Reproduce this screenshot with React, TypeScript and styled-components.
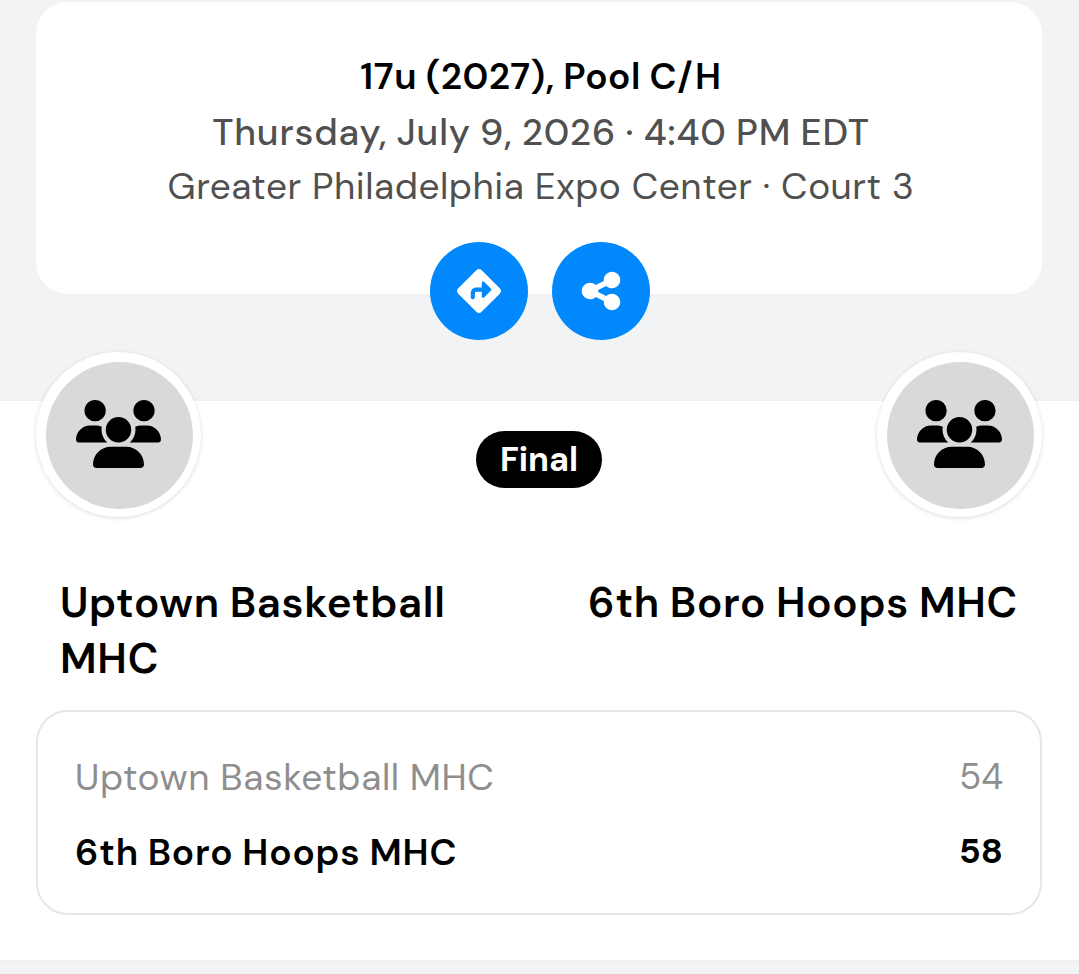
import React from 'react';
import styled, { createGlobalStyle } from 'styled-components';
import { FaDiamondTurnRight, FaShareNodes, FaUsers } from 'react-icons/fa6';

interface Team {
  name: string;
  score: number;
  winner: boolean;
}

const teams: Team[] = [
  { name: 'Uptown Basketball MHC', score: 54, winner: false },
  { name: '6th Boro Hoops MHC', score: 58, winner: true },
];

const TeamLogo: React.FC = () => (
  <LogoRing>
    <LogoCircle>
      <FaUsers />
    </LogoCircle>
  </LogoRing>
);

const App: React.FC = () => {
  const [home, away] = teams;

  return (
    <>
      <GlobalStyle />
      <Page>
        <Header>
          <InfoCard>
            <Division>17u (2027), Pool C/H</Division>
            <GameTime>Thursday, July 9, 2026 · 4:40 PM EDT</GameTime>
            <Venue>Greater Philadelphia Expo Center · Court 3</Venue>
          </InfoCard>
          <Actions>
            <ActionButton aria-label="Directions">
              <FaDiamondTurnRight size={44} />
            </ActionButton>
            <ActionButton aria-label="Share">
              <FaShareNodes size={44} />
            </ActionButton>
          </Actions>
        </Header>

        <Matchup>
          <Logos>
            <TeamLogo />
            <Status>Final</Status>
            <TeamLogo />
          </Logos>
          <TeamNames>
            <TeamName>{home.name}</TeamName>
            <TeamName $right>{away.name}</TeamName>
          </TeamNames>
          <ScoreTable>
            {teams.map((team) => (
              <ScoreRow key={team.name} $winner={team.winner}>
                <span>{team.name}</span>
                <Score $winner={team.winner}>{team.score}</Score>
              </ScoreRow>
            ))}
          </ScoreTable>
        </Matchup>
      </Page>
    </>
  );
};

export default App;

const GlobalStyle = createGlobalStyle`
  * {
    box-sizing: border-box;
  }

  body {
    margin: 0;
    background: #f1f3f5;
    font-family: 'DM Sans', Inter, 'Liberation Sans', sans-serif;
  }
`;

const Page = styled.main`
  width: 100%;
  height: 974px;
  overflow: hidden;
  background: #f1f3f5;
`;

const Header = styled.header`
  height: 399px;
  padding: 2px 37px 0 36px;
`;

const InfoCard = styled.section`
  display: flex;
  flex-direction: column;
  align-items: center;
  height: 292px;
  padding: 46px 0 0 4px;
  background: #fff;
  border-radius: 32px;
  white-space: nowrap;
`;

const Division = styled.h1`
  margin: 0;
  font-size: 37px;
  font-weight: 600;
  line-height: 57px;
  letter-spacing: 0.55px;
  word-spacing: -1px;
  color: #000;
`;

const GameTime = styled.div`
  font-size: 37px;
  font-weight: 500;
  line-height: 54px;
  letter-spacing: 0.85px;
  word-spacing: -1px;
  color: #505050;
`;

const Venue = styled.div`
  font-size: 37px;
  font-weight: 400;
  line-height: 54px;
  letter-spacing: 0.54px;
  color: #505050;
`;

const Actions = styled.div`
  display: flex;
  justify-content: center;
  gap: 24px;
  margin-top: -52px;
  padding-left: 1px;
`;

const ActionButton = styled.button`
  display: flex;
  align-items: center;
  justify-content: center;
  width: 98px;
  height: 98px;
  padding: 0;
  border: none;
  border-radius: 50%;
  background: #0088fc;
  color: #fff;
  cursor: pointer;
  z-index: 1;
`;

const Matchup = styled.section`
  height: 563px;
  padding: 0 37px 0 36px;
  background: #fff;
  border-top: 2px solid #eeeff0;
  border-bottom: 2px solid #eeeff0;
`;

const Logos = styled.div`
  display: flex;
  align-items: flex-start;
  justify-content: space-between;
  height: 166px;
  margin-top: -49px;
`;

const LogoRing = styled.div`
  width: 165px;
  height: 165px;
  padding: 10px 8px 8px 10px;
  border-radius: 50%;
  background: #fff;
  box-shadow: 0 1px 4px rgba(0, 0, 0, 0.14);
`;

const LogoCircle = styled.div`
  display: flex;
  align-items: center;
  justify-content: center;
  width: 147px;
  height: 147px;
  border-radius: 50%;
  background: #d9d9d9;
  color: #000;

  svg {
    width: 85px;
    height: 68px;
    margin: 0 2px 3px 0;
    flex-shrink: 0;
  }
`;

const Status = styled.div`
  width: 126px;
  height: 57px;
  margin-top: 79px;
  border-radius: 29px;
  background: #000;
  color: #fff;
  font-size: 34px;
  font-weight: 700;
  line-height: 58px;
  text-align: center;
`;

const TeamNames = styled.div`
  display: flex;
  justify-content: space-between;
  padding: 57px 24px 0 24px;
`;

const TeamName = styled.h2<{ $right?: boolean }>`
  width: 440px;
  margin: 0;
  font-size: 42px;
  font-weight: 600;
  line-height: 56px;
  letter-spacing: 0.7px;
  word-spacing: -1px;
  text-align: ${({ $right }) => ($right ? 'right' : 'left')};
  color: #000;
`;

const ScoreTable = styled.div`
  height: 205px;
  margin-top: 23px;
  padding: 28px 37px 0;
  border: 2px solid #e6e6e6;
  border-radius: 32px;
`;

const ScoreRow = styled.div<{ $winner: boolean }>`
  display: flex;
  justify-content: space-between;
  font-size: 37px;
  font-weight: ${({ $winner }) => ($winner ? 600 : 400)};
  line-height: 75px;
  letter-spacing: ${({ $winner }) => ($winner ? 0.84 : 0.65)}px;
  word-spacing: ${({ $winner }) => ($winner ? -1 : -0.5)}px;
  color: ${({ $winner }) => ($winner ? '#000' : '#8e8e8e')};
`;

const Score = styled.span<{ $winner: boolean }>`
  font-size: ${({ $winner }) => ($winner ? 35 : 36)}px;
  font-weight: ${({ $winner }) => ($winner ? 700 : 400)};
  line-height: 73px;
  letter-spacing: 0;
`;
